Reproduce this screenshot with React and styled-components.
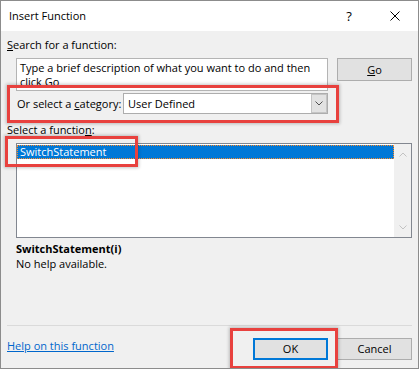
import React from 'react';
import styled, { createGlobalStyle } from 'styled-components';

const GlobalStyle = createGlobalStyle`
  html, body { margin: 0; padding: 0; background: #ffffff; }
  body {
    font-family: "Open Sans", "Noto Sans", sans-serif;
    font-size: 11px;
    color: #000000;
  }
`;

const Window = styled.div`
  position: relative;
  box-sizing: border-box;
  width: 419px;
  height: 369px;
  border: 1px solid #8c8c8c;
  background: #f0f0f0;
  display: flex;
  flex-direction: column;
  overflow: hidden;
`;

const TitleBar = styled.div`
  height: 30px;
  flex-shrink: 0;
  background: #ffffff;
  display: flex;
  align-items: center;
`;

const Title = styled.div`
  flex: 1;
  padding-left: 8px;
  line-height: 16px;
`;

const CaptionButton = styled.div`
  width: 46px;
  height: 30px;
  display: flex;
  align-items: center;
  justify-content: center;
  font-size: 13px;
  line-height: 16px;
`;

const Body = styled.div`
  flex: 1;
  display: flex;
  flex-direction: column;
  padding: 0 6px 8px 6px;
`;

const FieldLabel = styled.div`
  line-height: 16px;
  margin-top: ${(p) => p.$top}px;
  white-space: nowrap;
`;

const SearchRow = styled.div`
  display: flex;
  align-items: flex-start;
  gap: 9px;
  margin-top: 5px;
  padding-left: 9px;
`;

const SearchBox = styled.div`
  box-sizing: border-box;
  width: 312px;
  height: 33px;
  border: 1px solid #b4b4b4;
  background: #ffffff;
  padding: 2px 3px;
  line-height: 14px;
  overflow: hidden;
`;

const SearchLine = styled.div`
  white-space: nowrap;
`;

const Button = styled.div`
  box-sizing: border-box;
  width: 75px;
  height: ${(p) => p.$h || 22}px;
  background: #e1e1e1;
  border: ${(p) => (p.$default ? '2px solid #0078d7' : '1px solid #adadad')};
  display: flex;
  align-items: center;
  justify-content: center;
  line-height: 16px;
  flex-shrink: 0;
`;

const CategoryRow = styled.div`
  display: flex;
  align-items: center;
  margin-top: 2px;
  padding-left: 10px;
  height: 21px;
`;

const CategoryLabel = styled.div`
  width: 106px;
  white-space: nowrap;
  line-height: 16px;
`;

const Combo = styled.div`
  box-sizing: border-box;
  width: 205px;
  height: 21px;
  border: 1px solid #adadad;
  background: #ffffff;
  display: flex;
  align-items: stretch;
`;

const ComboValue = styled.div`
  flex: 1;
  padding-left: 4px;
  display: flex;
  align-items: center;
  line-height: 16px;
`;

const DropButton = styled.div`
  box-sizing: border-box;
  width: 16px;
  background: #e2e2e2;
  border: 1px solid #c4c4c4;
  display: flex;
  align-items: center;
  justify-content: center;
`;

const ListBox = styled.div`
  box-sizing: border-box;
  margin-top: 5px;
  margin-left: 9px;
  height: 95px;
  border: 1px solid #828790;
  background: #ffffff;
  display: flex;
`;

const ListItems = styled.div`
  flex: 1;
  padding-top: 1px;
`;

const ListRow = styled.div`
  box-sizing: border-box;
  height: 14px;
  line-height: 12px;
  padding-left: 2px;
  background: ${(p) => (p.$selected ? '#0078d7' : 'transparent')};
  color: ${(p) => (p.$selected ? '#ffffff' : '#000000')};
  border: 1px dotted ${(p) => (p.$selected ? '#ff8c28' : 'transparent')};
  white-space: nowrap;
`;

const ScrollBar = styled.div`
  width: 17px;
  background: #f0f0f0;
  display: flex;
  flex-direction: column;
  justify-content: space-between;
`;

const ScrollArrow = styled.div`
  height: 20px;
  display: flex;
  align-items: center;
  justify-content: center;
`;

const Description = styled.div`
  margin-top: 3px;
  margin-left: 9px;
  line-height: 15px;
`;

const FuncSignature = styled.div`
  font-weight: 700;
`;

const Footer = styled.div`
  margin-top: auto;
`;

const Separator = styled.div`
  height: 1px;
  background: #dadada;
`;

const FooterRow = styled.div`
  margin-top: 12px;
  display: flex;
  align-items: flex-start;
  gap: 9px;
`;

const HelpLink = styled.a`
  flex: 1;
  color: #0066cc;
  text-decoration: underline;
  line-height: 16px;
  cursor: pointer;
`;

const Highlight = styled.div`
  position: absolute;
  box-sizing: border-box;
  left: ${(p) => p.$x}px;
  top: ${(p) => p.$y}px;
  width: ${(p) => p.$w}px;
  height: ${(p) => p.$h}px;
  border: 3px solid #e8413e;
  box-shadow: 0 0 3px 1px rgba(0, 0, 0, 0.22);
  pointer-events: none;
`;

const Chevron = ({ up, color = '#555', w = 8, h = 5 }) => (
  <svg width={w} height={h} viewBox="0 0 8 5">
    <polyline
      points={up ? '0.5,4.5 4,1 7.5,4.5' : '0.5,0.5 4,4 7.5,0.5'}
      fill="none"
      stroke={color}
      strokeWidth="1"
    />
  </svg>
);

const CloseIcon = () => (
  <svg width="10" height="10" viewBox="0 0 10 10">
    <path d="M0.5 0.5 L9.5 9.5 M9.5 0.5 L0.5 9.5" stroke="#000" strokeWidth="1" />
  </svg>
);

export default function App() {
  return (
    <>
      <GlobalStyle />
      <Window>
        <TitleBar>
          <Title>Insert Function</Title>
          <CaptionButton>?</CaptionButton>
          <CaptionButton>
            <CloseIcon />
          </CaptionButton>
        </TitleBar>
        <Body>
          <FieldLabel $top={6}>
            <u>S</u>earch for a function:
          </FieldLabel>
          <SearchRow>
            <SearchBox>
              <SearchLine>Type a brief description of what you want to do and then</SearchLine>
              <SearchLine>click Go</SearchLine>
            </SearchBox>
            <Button $h={23}>
              <span>
                <u>G</u>o
              </span>
            </Button>
          </SearchRow>
          <CategoryRow>
            <CategoryLabel>
              Or select a <u>c</u>ategory:
            </CategoryLabel>
            <Combo>
              <ComboValue>User Defined</ComboValue>
              <DropButton>
                <Chevron color="#505050" />
              </DropButton>
            </Combo>
          </CategoryRow>
          <FieldLabel $top={8}>
            Select a functio<u>n</u>:
          </FieldLabel>
          <ListBox>
            <ListItems>
              <ListRow $selected>SwitchStatement</ListRow>
            </ListItems>
            <ScrollBar>
              <ScrollArrow>
                <Chevron up color="#c2c2c2" />
              </ScrollArrow>
              <ScrollArrow>
                <Chevron color="#c2c2c2" />
              </ScrollArrow>
            </ScrollBar>
          </ListBox>
          <Description>
            <FuncSignature>SwitchStatement(i)</FuncSignature>
            <div>No help available.</div>
          </Description>
          <Footer>
            <Separator />
            <FooterRow>
              <HelpLink>Help on this function</HelpLink>
              <Button $default>OK</Button>
              <Button>Cancel</Button>
            </FooterRow>
          </Footer>
        </Body>
        <Highlight $x={6} $y={84} $w={332} $h={38} />
        <Highlight $x={4} $y={135} $w={133} $h={31} />
        <Highlight $x={229} $y={327} $w={108} $h={41} />
      </Window>
    </>
  );
}
